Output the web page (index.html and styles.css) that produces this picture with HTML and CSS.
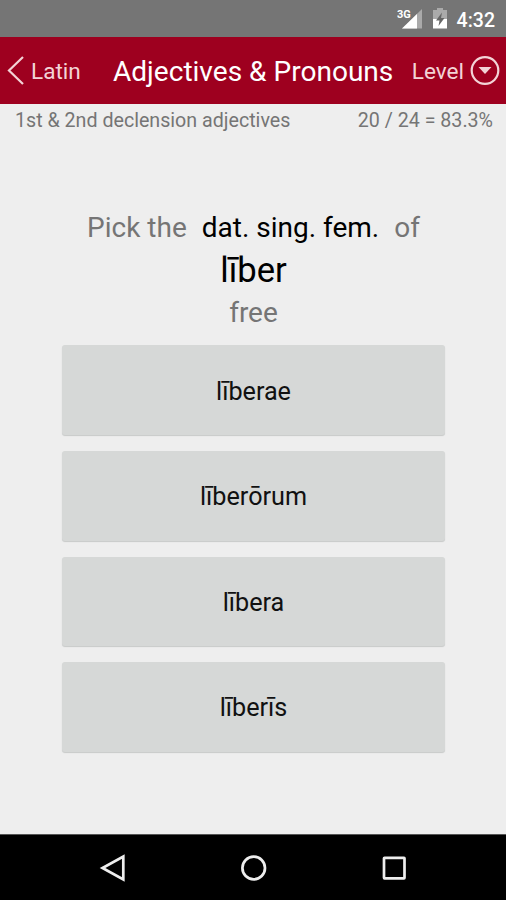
FILE: index.html
```html
<!DOCTYPE html>
<html lang="en">
<head>
<meta charset="utf-8">
<title>Adjectives &amp; Pronouns</title>
<link rel="stylesheet" href="styles.css">
</head>
<body>
<div class="screen">
  <div class="status">
    <svg class="signal" viewBox="0 0 26 24" width="26" height="24">
      <path d="M25 2v19.500H5z" fill="#aaa"/>
      <path d="M20 7v14.500H5z" fill="#fff"/>
      <path d="M0 1h14v10H0z" fill="#757575"/>
      <text class="net" x="0" y="10.500">3G</text>
    </svg>
    <svg class="battery" viewBox="0 0 16 22" width="16" height="22">
      <path d="M5 0h6v2h4v9H1V2h4z" fill="#aaa"/>
      <path d="M1 11h14v9.500H1z" fill="#fff"/>
      <path d="M10 4.500L4 12.500h3.500L6.500 18l6-8H9z" fill="#666"/>
    </svg>
    <span class="clock">4:32</span>
  </div>
  <header class="bar">
    <div class="back">
      <svg viewBox="0 0 18 30" width="18" height="30"><path d="M16 1L2 14.500 16 28" fill="none" stroke="#f3d3d6" stroke-width="2.200"/></svg>
      <span class="label">Latin</span>
    </div>
    <h1 class="title">Adjectives &amp; Pronouns</h1>
    <div class="level">
      <span class="label">Level</span>
      <svg viewBox="0 0 30 30" width="30" height="30"><circle cx="15" cy="14.500" r="13.300" fill="none" stroke="#f3d3d6" stroke-width="2.200"/><path d="M8.500 11h13L15 18z" fill="#f3d3d6"/></svg>
    </div>
  </header>
  <div class="info"><span class="topic">1st &amp; 2nd declension adjectives</span><span class="score">20 / 24 = 83.3%</span></div>
  <main class="quiz">
    <div class="prompt"><span>Pick the</span><span class="form">dat. sing. fem.</span><span>of</span></div>
    <div class="word">līber</div>
    <div class="meaning">free</div>
    <div class="answers">
      <button class="answer">līberae</button>
      <button class="answer">līberōrum</button>
      <button class="answer">lībera</button>
      <button class="answer">līberīs</button>
    </div>
  </main>
  <nav class="nav">
    <svg viewBox="0 0 28 28" width="28" height="28"><path d="M24.300 2.500v23L3.500 14z"/></svg>
    <svg viewBox="0 0 28 28" width="28" height="28"><circle cx="13.700" cy="14" r="11.300"/></svg>
    <svg viewBox="0 0 28 28" width="28" height="28"><rect x="4" y="3.800" width="20.500" height="20.500" rx=".5"/></svg>
  </nav>
</div>
</body>
</html>
```
FILE: styles.css
```css
* { box-sizing: border-box; }
body { margin: 0; font-family: Roboto, sans-serif; background: #eee; }
.screen { width: 506px; height: 900px; display: flex; flex-direction: column; overflow: hidden; white-space: nowrap; }
.status { height: 37px; background: #757575; color: #fff; display: flex; align-items: flex-start; justify-content: flex-end; padding: 7px 11px 0 0; }
.signal { margin-right: 9px; }
.battery { margin-right: 9px; margin-top: 1px; }
.net { font-size: 11px; font-weight: 700; fill: #fff; }
.clock { font-size: 19.500px; font-weight: 500; line-height: 26px; padding-top: 1px; }
.bar { height: 67px; background: #9e001f; display: flex; align-items: center; color: #f3d3d6; padding: 0 6px 0 7px; font-size: 22.600px; }
.back, .level { display: flex; align-items: center; }
.back { gap: 6px; width: 106px; }
.label { padding-top: 2px; }
.title { margin: 0; padding-top: 2px; font-size: 28.050px; font-weight: 400; color: #fff; }
.level { gap: 6px; margin-left: auto; }
.info { height: 32px; display: flex; justify-content: space-between; padding: 0 13px 0 15px; font-size: 19.650px; line-height: 33px; color: #757575; }
.quiz { flex: 1; display: flex; flex-direction: column; align-items: center; padding-top: 72px; color: #757575; }
.prompt { display: flex; gap: 15px; font-size: 28px; line-height: 40px; padding-left: 1px; }
.form, .word { color: #000; }
.word { font-size: 34.600px; line-height: 44px; margin-bottom: 1px; padding-left: 1px; }
.meaning { font-size: 28px; line-height: 40px; padding-left: 1px; }
.answers { display: flex; flex-direction: column; gap: 16px; width: 383px; margin: 12.400px 0 0 1px; }
.answer { height: 89.600px; border: 0; border-radius: 3px; background: #d6d8d7; box-shadow: 0 1px 1px #c7c9c8; font: 400 25.200px/30px Roboto, sans-serif; color: #111; padding: 3px 0 0; }
.nav { height: 66px; background: #000; border-top: 1px solid #555; display: flex; justify-content: space-between; align-items: center; padding: 1px 98px 0 99px; }
.nav svg { fill: none; stroke: #eee; stroke-width: 2.700; }
```
